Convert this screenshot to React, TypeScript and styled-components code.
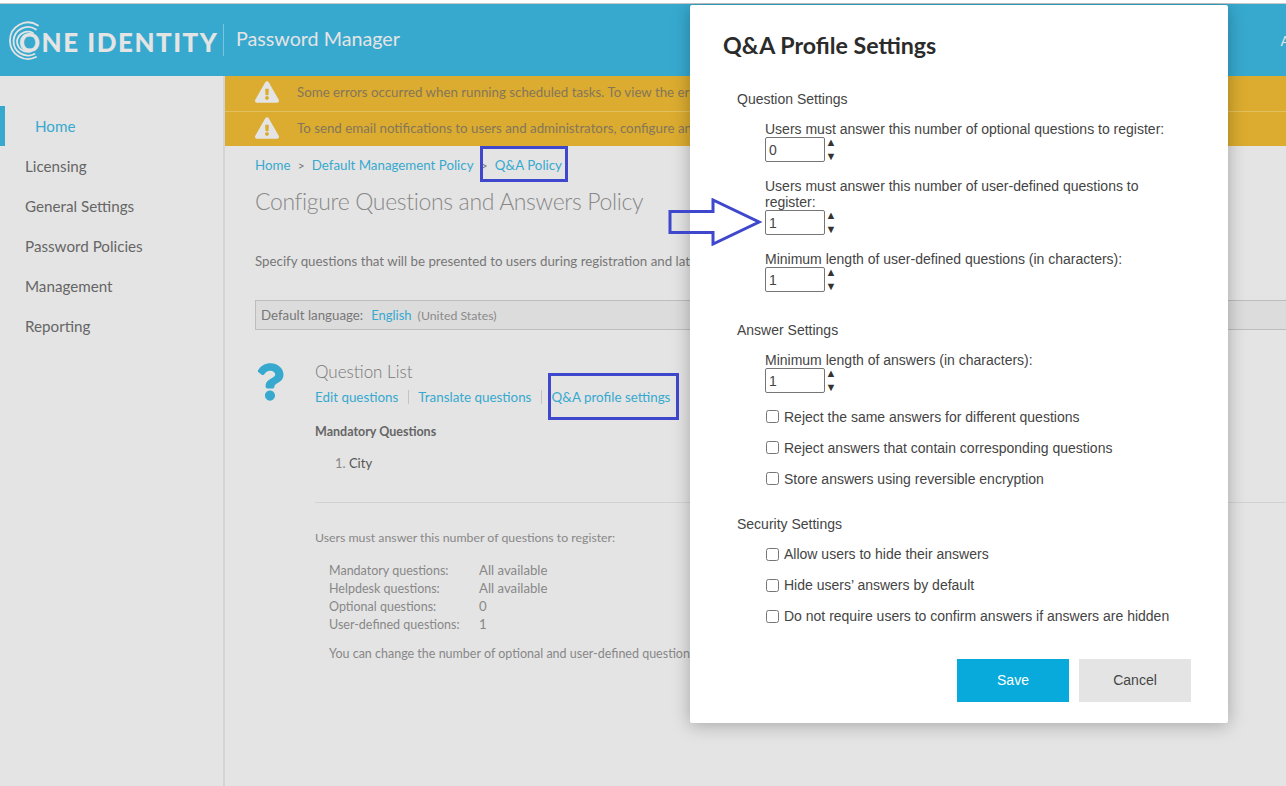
import styled, { createGlobalStyle } from "styled-components";
import { FaExclamationTriangle, FaQuestion } from "react-icons/fa";
////////////////////////////////////////////////////////////////////////////////

const BLUE = "#37a9cf";
const MARK = "#3f48cc";
const SANS = `Lato, "Open Sans", sans-serif`;
const ARIAL = `"Liberation Sans", Arial, sans-serif`;

const GlobalStyle = createGlobalStyle`
  html, body {
    margin: 0;
    padding: 0;
    height: 786px;
    overflow: hidden;
    background: #e4e4e4;
  }
  * {
    box-sizing: border-box;
  }
`;

const menu = ["Licensing", "General Settings", "Password Policies", "Management", "Reporting"];

const counts = [
  ["Mandatory questions:", "All available"],
  ["Helpdesk questions:", "All available"],
  ["Optional questions:", "0"],
  ["User-defined questions:", "1"],
];

function Logo() {
  return (
    <LogoWrap>
      <LogoRings width="40" height="40" viewBox="0 0 40 40" fill="none" stroke="#e4e4e4" strokeLinecap="round">
        <path d="M31 4.5A18 18 0 0 0 3 20a18 18 0 0 0 26 16" strokeWidth="1.8" />
        <path d="M29 8.5A14.5 14.5 0 0 0 6.5 20a14.5 14.5 0 0 0 21 13" strokeWidth="1.8" />
        <path d="M26 12A11 11 0 0 0 10 20a11 11 0 0 0 14 10.5" strokeWidth="1.8" />
      </LogoRings>
      <LogoText>ONE IDENTITY</LogoText>
    </LogoWrap>
  );
}

function NumberField({ label, value }: { label: string; value: string }) {
  return (
    <Field>
      <FieldLabel>{label}</FieldLabel>
      <Spinner>
        <NumberInput defaultValue={value} />
        <Arrows>
          <span>▲</span>
          <span>▼</span>
        </Arrows>
      </Spinner>
    </Field>
  );
}

function Check({ label }: { label: string }) {
  return (
    <CheckRow>
      <input type="checkbox" />
      <span>{label}</span>
    </CheckRow>
  );
}

export default function App() {
  return (
    <Page>
      <GlobalStyle />
      <Header>
        <Logo />
        <ProductName>Password Manager</ProductName>
        <UserName>A</UserName>
      </Header>
      <Body>
        <Sidebar>
          <ActiveItem>Home</ActiveItem>
          {menu.map((item) => (
            <MenuItem key={item}>{item}</MenuItem>
          ))}
        </Sidebar>
        <Main>
          <Banner>
            <BannerRow>
              <FaExclamationTriangle />
              <span>Some errors occurred when running scheduled tasks. To view the errors</span>
            </BannerRow>
            <BannerRow>
              <FaExclamationTriangle />
              <span>To send email notifications to users and administrators, configure an</span>
            </BannerRow>
          </Banner>
          <Content>
            <Crumbs>
              <Link>Home</Link>
              <CrumbSep>&gt;</CrumbSep>
              <Link>Default Management Policy</Link>
              <CrumbSep>&gt;</CrumbSep>
              <Link>Q&amp;A Policy</Link>
            </Crumbs>
            <PageTitle>Configure Questions and Answers Policy</PageTitle>
            <Description>Specify questions that will be presented to users during registration and later</Description>
            <LanguageBar>
              <b>Default language:</b>
              <Link>English</Link>
              <small>(United States)</small>
            </LanguageBar>
            <QuestionBlock>
              <QuestionIcon>
                <FaQuestion />
              </QuestionIcon>
              <QuestionBody>
                <BlockTitle>Question List</BlockTitle>
                <LinkRow>
                  <Link>Edit questions</Link>
                  <LinkSep />
                  <Link>Translate questions</Link>
                  <LinkSep />
                  <Link>Q&amp;A profile settings</Link>
                </LinkRow>
                <ListTitle>Mandatory Questions</ListTitle>
                <ListItem>
                  <span>1.</span> City
                </ListItem>
                <Rule />
                <Note>Users must answer this number of questions to register:</Note>
                <Counts>
                  {counts.map(([name, value]) => (
                    <CountRow key={name}>
                      <span>{name}</span>
                      <CountValue>{value}</CountValue>
                    </CountRow>
                  ))}
                </Counts>
                <ChangeNote>You can change the number of optional and user-defined questions</ChangeNote>
              </QuestionBody>
            </QuestionBlock>
          </Content>
        </Main>
      </Body>

      <CrumbMark />
      <LinkMark />
      <PointerArrow width="94" height="48" viewBox="0 0 94 48" fill="none">
        <path d="M2 13.5H45V2L91 24L45 46V34.5H2Z" stroke={MARK} strokeWidth="3" />
      </PointerArrow>

      <Modal>
        <ModalTitle>Q&amp;A Profile Settings</ModalTitle>
        <Section>
          <SectionTitle>Question Settings</SectionTitle>
          <NumberField label="Users must answer this number of optional questions to register:" value="0" />
          <NumberField label="Users must answer this number of user-defined questions to register:" value="1" />
          <NumberField label="Minimum length of user-defined questions (in characters):" value="1" />
        </Section>
        <Section>
          <SectionTitle>Answer Settings</SectionTitle>
          <NumberField label="Minimum length of answers (in characters):" value="1" />
          <CheckList>
            <Check label="Reject the same answers for different questions" />
            <Check label="Reject answers that contain corresponding questions" />
            <Check label="Store answers using reversible encryption" />
          </CheckList>
        </Section>
        <Section>
          <SectionTitle>Security Settings</SectionTitle>
          <CheckList>
            <Check label="Allow users to hide their answers" />
            <Check label="Hide users’ answers by default" />
            <Check label="Do not require users to confirm answers if answers are hidden" />
          </CheckList>
        </Section>
        <Buttons>
          <SaveButton>Save</SaveButton>
          <CancelButton>Cancel</CancelButton>
        </Buttons>
      </Modal>
    </Page>
  );
}

const Page = styled.div`
  position: relative;
  width: 1286px;
  height: 786px;
  overflow: hidden;
  background: #e4e4e4;
  border-top: 3px solid #fff;
  font-family: ${SANS};
`;

const Header = styled.header`
  display: flex;
  align-items: center;
  height: 73px;
  border-top: 1px solid #c9c9c9;
  background: ${BLUE};
  color: #e4e4e4;
  white-space: nowrap;
`;

const LogoWrap = styled.div`
  position: relative;
  width: 224px;
  height: 32px;
  margin-right: 12px;
  border-right: 1px solid #7cc4dd;
`;

const LogoRings = styled.svg`
  position: absolute;
  left: 7px;
  top: -3px;
`;

const LogoText = styled.div`
  padding: 2px 0 0 19px;
  font-size: 26px;
  line-height: 32px;
  font-weight: 900;
  letter-spacing: 1.5px;
`;

const ProductName = styled.div`
  margin-bottom: 3px;
  font-size: 19.7px;
  font-weight: 400;
`;

const UserName = styled.div`
  margin-left: auto;
  margin-right: -4px;
  font-size: 14px;
`;

const Body = styled.div`
  display: flex;
  height: 710px;
`;

const Sidebar = styled.nav`
  flex: none;
  width: 225px;
  padding-top: 30px;
  border-right: 2px solid #d4d4d4;
  font-size: 15.2px;
  color: #666;
`;

const MenuItem = styled.div`
  height: 40px;
  padding-left: 25px;
  line-height: 40px;
`;

const ActiveItem = styled(MenuItem)`
  padding-left: 30px;
  border-left: 5px solid ${BLUE};
  color: ${BLUE};
`;

const Main = styled.main`
  flex: 1;
  min-width: 0;
`;

const Banner = styled.div`
  background: #dbac30;
  color: #85765a;
  font-size: 13.3px;
`;

const BannerRow = styled.div`
  display: flex;
  align-items: center;
  gap: 18px;
  height: 35px;
  padding: 0 0 3px 30px;
  white-space: nowrap;
  & + & {
    border-top: 1px solid #e3c05f;
  }
  svg {
    flex: none;
    width: 24px;
    height: 24px;
    color: #e4e4e4;
  }
`;

const Content = styled.div`
  padding-left: 30px;
  color: #777;
  white-space: nowrap;
`;

const Link = styled.span`
  color: ${BLUE};
`;

const Crumbs = styled.div`
  display: flex;
  height: 38px;
  align-items: center;
  font-size: 13.3px;
`;

const CrumbSep = styled.span`
  margin: 0 7.2px;
  font-size: 12px;
  color: #777;
`;

const PageTitle = styled.h1`
  margin: 0;
  font-size: 23px;
  line-height: 34px;
  font-weight: 300;
  letter-spacing: -0.35px;
  color: #888;
`;

const Description = styled.div`
  margin-top: 33px;
  font-size: 13.3px;
  line-height: 20px;
`;

const LanguageBar = styled.div`
  display: flex;
  align-items: center;
  gap: 8px;
  height: 30px;
  margin-top: 29px;
  padding-left: 5px;
  border: 1px solid #bdbdbd;
  border-right: none;
  background: #dcdcdc;
  font-size: 13.3px;
  b {
    font-weight: 400;
  }
  ${Link} {
    font-size: 13px;
  }
  small {
    margin-left: -2px;
    font-size: 12.3px;
    color: #8a8a8a;
  }
`;

const QuestionBlock = styled.div`
  display: flex;
  margin-top: 31px;
`;

const QuestionIcon = styled.div`
  flex: none;
  width: 60px;
  height: 40px;
  padding: 2px 0 0 1px;
  color: ${BLUE};
  svg {
    width: 28px;
    height: 38px;
  }
`;

const QuestionBody = styled.div`
  flex: 1;
  min-width: 0;
`;

const BlockTitle = styled.div`
  font-size: 17px;
  line-height: 22px;
  font-weight: 300;
`;

const LinkRow = styled.div`
  display: flex;
  align-items: center;
  height: 28px;
  font-size: 13.4px;
`;

const LinkSep = styled.span`
  width: 1px;
  height: 14px;
  margin: 0 9.5px;
  background: #c4c4c4;
`;

const ListTitle = styled.div`
  margin-top: 12px;
  font-size: 12.5px;
  line-height: 18px;
  font-weight: 700;
  color: #666;
`;

const ListItem = styled.div`
  margin-top: 13px;
  padding-left: 20px;
  font-size: 13px;
  line-height: 18px;
  color: #555;
  span {
    color: #888;
  }
`;

const Rule = styled.div`
  height: 1px;
  margin-top: 30px;
  background: #d2d2d2;
`;

const Note = styled.div`
  margin-top: 26px;
  font-size: 12.3px;
  line-height: 18px;
  color: #888;
`;

const Counts = styled.div`
  margin-top: 14px;
  padding-left: 14px;
`;

const CountRow = styled.div`
  display: grid;
  grid-template-columns: 150px auto;
  justify-content: start;
  align-items: baseline;
  height: 18px;
  font-size: 12.5px;
  line-height: 18px;
  color: #888;
`;

const CountValue = styled.span`
  font-size: 13.2px;
`;

const ChangeNote = styled.div`
  margin-top: 12px;
  padding-left: 14px;
  font-size: 12.5px;
  line-height: 18px;
  color: #888;
`;

const CrumbMark = styled.div`
  position: absolute;
  left: 480px;
  top: 143px;
  width: 88px;
  height: 36px;
  border: 3px solid ${MARK};
`;

const LinkMark = styled.div`
  position: absolute;
  left: 548px;
  top: 370px;
  width: 131px;
  height: 47px;
  border: 3px solid ${MARK};
`;

const PointerArrow = styled.svg`
  position: absolute;
  left: 668px;
  top: 195px;
  z-index: 2;
`;

const Modal = styled.div`
  position: absolute;
  left: 690px;
  top: 2px;
  width: 538px;
  height: 718px;
  padding: 26px 37px 0 33px;
  border-radius: 2px;
  background: #fff;
  box-shadow: 0 2px 18px rgba(0, 0, 0, 0.28);
  font-family: ${ARIAL};
  font-size: 14px;
  color: #444;
`;

const ModalTitle = styled.h2`
  margin: -1px 0 31px;
  font-family: ${SANS};
  font-size: 23.2px;
  line-height: 30px;
  font-weight: 700;
  color: #2b2b2b;
`;

const Section = styled.section`
  display: flow-root;
  padding-left: 14px;
  margin-top: 14px;
`;

const SectionTitle = styled.div`
  line-height: 16px;
  margin-bottom: 14px;
`;

const Field = styled.div`
  padding-left: 28px;
  margin-bottom: 16px;
`;

const FieldLabel = styled.div`
  line-height: 16px;
`;

const Spinner = styled.div`
  display: flex;
  align-items: center;
  gap: 0;
  height: 25px;
`;

const NumberInput = styled.input`
  width: 60px;
  height: 25px;
  padding: 0 3px;
  border: 1px solid #767676;
  border-radius: 2px;
  font-family: ${ARIAL};
  font-size: 14px;
  color: #444;
`;

const Arrows = styled.div`
  display: flex;
  flex-direction: column;
  width: 12px;
  margin-top: -2px;
  font-size: 11px;
  line-height: 14px;
  text-align: center;
  color: #333;
`;

const CheckList = styled.div`
  margin: -7.5px 0 7px;
  ${SectionTitle} + & {
    margin-top: -6.5px;
  }
`;

const CheckRow = styled.label`
  display: flex;
  align-items: center;
  height: 31px;
  padding-left: 28px;
  input {
    width: 13px;
    height: 13px;
    margin: -1px 5px 0 1px;
  }
  span {
    margin-top: -1px;
  }
`;

const Buttons = styled.div`
  display: flex;
  justify-content: flex-end;
  gap: 10px;
  margin-top: 20px;
`;

const SaveButton = styled.button`
  width: 112px;
  height: 43px;
  padding: 0 0 2px;
  border: none;
  background: #07aada;
  font-family: ${ARIAL};
  font-size: 14px;
  color: #fff;
`;

const CancelButton = styled(SaveButton)`
  background: #e4e4e4;
  color: #444;
`;
